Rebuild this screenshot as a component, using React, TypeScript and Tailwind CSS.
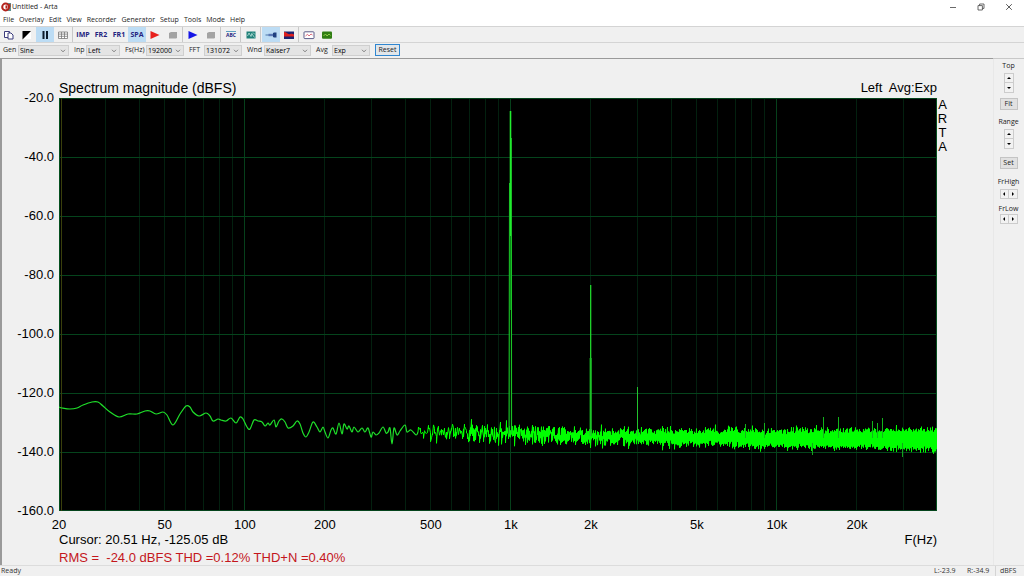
import { useMemo } from 'react'
import type { ReactNode } from 'react'

const PLOT_W = 878
const PLOT_H = 413
const F_MIN = 20
const F_MAX = 40000
const BIN_HZ = 192000 / 131072

const Y_TICKS = ['-20.0', '-40.0', '-60.0', '-80.0', '-100.0', '-120.0', '-140.0', '-160.0']
const X_TICKS: [number, string][] = [
  [20, '20'],
  [50, '50'],
  [100, '100'],
  [200, '200'],
  [500, '500'],
  [1000, '1k'],
  [2000, '2k'],
  [5000, '5k'],
  [10000, '10k'],
  [20000, '20k'],
]

const MENU = ['File', 'Overlay', 'Edit', 'View', 'Recorder', 'Generator', 'Setup', 'Tools', 'Mode', 'Help']

// low end of the trace, in plot units
const LOW_END: [number, number][] = [
  [0, 309], [3, 310], [11, 311], [18, 310], [24, 307], [33, 304], [39, 304], [44, 308], [51, 314], [60, 319],
  [69, 316], [78, 316], [86, 313], [91, 313], [97, 316], [104, 314], [108, 317], [114, 327], [121, 316],
  [127, 308], [131, 309], [134, 314], [140, 318], [147, 315], [151, 318], [154, 323], [159, 321], [162, 322],
  [167, 323], [172, 320], [177, 325], [181, 319], [184, 321], [188, 329], [191, 331], [195, 322], [199, 323],
  [203, 324], [206, 328], [209, 325], [211, 327], [215, 322], [217, 329], [220, 323], [223, 321], [226, 324],
  [229, 330], [234, 328], [238, 323], [241, 326], [244, 335], [247, 339], [250, 334], [254, 324], [258, 329],
  [261, 334], [264, 329], [266, 334], [269, 340], [272, 332], [274, 330], [277, 336], [280, 325], [283, 336],
  [285, 326], [288, 331], [290, 328], [293, 334], [295, 329], [299, 334], [303, 330], [306, 334], [309, 330],
  [312, 339], [314, 334], [317, 337], [320, 335], [324, 329], [327, 335], [329, 334], [331, 330], [333, 346],
  [335, 330], [338, 337], [341, 333], [346, 327], [348, 334], [352, 332], [357, 337], [359, 334],
]

// centre of the noise floor
const FLOOR: [number, number][] = [
  [359, 334],
  [450, 335],
  [520, 338],
  [600, 339],
  [700, 340],
  [878, 341],
]

const SPURS: [number, number][] = [
  [686, 326],
  [705, 325],
  [764, 319],
  [779, 319],
  [813, 323],
  [818, 325],
  [823, 320],
]

function xOf(f: number) {
  return (PLOT_W * Math.log(f / F_MIN)) / Math.log(F_MAX / F_MIN)
}

function floorAt(x: number) {
  for (let i = 1; i < FLOOR.length; i++) {
    const [x0, y0] = FLOOR[i - 1]
    const [x1, y1] = FLOOR[i]
    if (x <= x1) return y0 + ((y1 - y0) * (x - x0)) / (x1 - x0)
  }
  return FLOOR[FLOOR.length - 1][1]
}

function makeRandom(seed: number) {
  let s = seed
  return () => {
    s = (s * 1664525 + 1013904223) >>> 0
    return s / 4294967296
  }
}

function smoothPath(pts: [number, number][]) {
  let d = `M${pts[0][0]} ${pts[0][1]}`
  for (let i = 0; i < pts.length - 1; i++) {
    const p0 = pts[Math.max(i - 1, 0)]
    const p1 = pts[i]
    const p2 = pts[i + 1]
    const p3 = pts[Math.min(i + 2, pts.length - 1)]
    const c1 = [p1[0] + (p2[0] - p0[0]) / 6, p1[1] + (p2[1] - p0[1]) / 6]
    const c2 = [p2[0] - (p3[0] - p1[0]) / 6, p2[1] - (p3[1] - p1[1]) / 6]
    d += `C${c1[0].toFixed(1)} ${c1[1].toFixed(1)} ${c2[0].toFixed(1)} ${c2[1].toFixed(1)} ${p2[0]} ${p2[1]}`
  }
  return d
}

function noisePath() {
  const rnd = makeRandom(7321)
  const gauss = () => {
    const u = rnd() || 0.0001
    return Math.sqrt(-2 * Math.log(u)) * Math.cos(2 * Math.PI * rnd())
  }
  let d = 'M359 334'
  let carry = 0
  for (let x = 359; x < PLOT_W; x++) {
    const f = F_MIN * Math.pow(F_MAX / F_MIN, x / PLOT_W)
    carry += (f * Math.log(F_MAX / F_MIN)) / PLOT_W / BIN_HZ / 2
    const n = Math.floor(carry)
    carry -= n
    if (n === 0) continue
    const mid = floorAt(x)
    const spread = 1 + 0.4 * Math.max(0, (640 - x) / 280)
    let lo = Infinity
    let hi = -Infinity
    for (let i = 0; i < n; i++) {
      const g = gauss()
      const y = mid + spread * g * (g > 0 ? 4.1 : 3.6)
      lo = Math.min(lo, y)
      hi = Math.max(hi, y)
    }
    d += `L${x + 0.5} ${lo.toFixed(1)}L${x + 0.5} ${hi.toFixed(1)}`
  }
  return d
}

function Spectrum() {
  const low = useMemo(() => smoothPath(LOW_END), [])
  const noise = useMemo(noisePath, [])

  const lines: { f: number; major: boolean }[] = []
  for (const decade of [10, 100, 1000, 10000]) {
    for (let k = 1; k <= 9; k++) {
      const f = decade * k
      if (f > F_MIN && f < F_MAX) lines.push({ f, major: k === 1 })
    }
  }

  return (
    <svg
      viewBox={`0 0 ${PLOT_W} ${PLOT_H}`}
      preserveAspectRatio="none"
      className="block w-full h-full min-h-0 bg-black"
      role="img"
      aria-label="Spectrum magnitude"
    >
      {lines.map(({ f, major }) => (
        <rect
          key={f}
          x={Math.floor(xOf(f))}
          y={0}
          width={1}
          height={PLOT_H}
          fill={major ? '#06401b' : '#03200f'}
        />
      ))}
      {Y_TICKS.map((t, i) => (
        <rect key={t} x={0} y={Math.min(i * 59, PLOT_H - 1)} width={PLOT_W} height={1} fill="#05441c" />
      ))}
      <rect x={0} y={0} width={1} height={PLOT_H} fill="#05501f" />
      <rect x={PLOT_W - 1} y={0} width={1} height={PLOT_H} fill="#05501f" />
      <rect x={2} y={0} width={1} height={PLOT_H} fill="#3a3f0c" />

      <path d={low} fill="none" stroke="#1fe02a" strokeWidth={1.2} />
      <path d={noise} fill="none" stroke="#00ff00" strokeWidth={1} strokeLinejoin="bevel" />
      {SPURS.map(([x, y]) => (
        <rect key={x} x={x} y={y} width={1} height={340 - y} fill="#13b31c" />
      ))}
      <path d="M753.5 345V357M843.5 345V359" stroke="#13a31c" />

      {/* fundamental */}
      <path d="M450.5 138L450.5 330L452.5 330L452.5 138Z" fill="#0a8a18" />
      <rect x={451} y={212} width={1} height={120} fill="#001a04" />
      <path d="M451.5 13V138" stroke="#22ee30" strokeWidth={1.6} />
      <path d="M450.5 85L450 336M452.4 40L452.6 336" fill="none" stroke="#1cc828" strokeWidth={1} />

      {/* harmonics */}
      <path d="M531.7 187V338" stroke="#22e42e" strokeWidth={1.2} />
      <path d="M531 260V338M532.4 260V338" stroke="#1cb826" strokeWidth={0.8} />
      <path d="M578.5 289V338" stroke="#22c42e" strokeWidth={1} />
    </svg>
  )
}

function ToolButton({ label, active, children }: { label: string; active?: boolean; children: ReactNode }) {
  return (
    <button
      type="button"
      aria-label={label}
      aria-pressed={active}
      className={`flex w-[18px] h-full items-center justify-center text-[7px] font-bold text-[#23237f] ${
        active ? 'bg-[#bcdcf4]' : ''
      }`}
    >
      {children}
    </button>
  )
}

function Divider() {
  return <span className="w-[2px] h-full border-l border-[#c8c8c8]" />
}

function Icon({ children }: { children: ReactNode }) {
  return (
    <svg viewBox="0 0 12 10" className="w-[12px] h-[10px]" aria-hidden="true">
      {children}
    </svg>
  )
}

function Combo({ id, label, value, width, labelWidth }: {
  id: string
  label: string
  value: string
  width: string
  labelWidth: string
}) {
  return (
    <div className="flex items-center">
      <label htmlFor={id} className={`${labelWidth} whitespace-nowrap`}>
        {label}
      </label>
      <span className={`relative block ${width}`}>
        <select
          id={id}
          defaultValue={value}
          className="block w-full h-[11px] appearance-none border border-[#cfcfcf] bg-[#e4e4e4] pl-px text-[7px] leading-[9px] text-black"
        >
          <option>{value}</option>
        </select>
        <svg viewBox="0 0 6 4" className="pointer-events-none absolute right-[3px] top-[4px] w-[6px] h-[4px]">
          <path d="M1 0.8L3 2.8L5 0.8" fill="none" stroke="#555" strokeWidth="0.7" />
        </svg>
      </span>
    </div>
  )
}

function Arrow({ dir }: { dir: 'up' | 'down' | 'left' | 'right' }) {
  const shapes = {
    up: 'M1 4L3 2L5 4Z',
    down: 'M1 2L3 4L5 2Z',
    left: 'M4 1L2 3L4 5Z',
    right: 'M2 1L4 3L2 5Z',
  }
  return (
    <svg viewBox="0 0 6 6" className="w-[6px] h-[6px]" aria-hidden="true">
      <path d={shapes[dir]} fill="#000" />
    </svg>
  )
}

const stepClass = 'flex items-center justify-center border border-[#cccccc] bg-[#f2f2f2]'

function VerticalStepper({ name }: { name: string }) {
  return (
    <div className="flex flex-col">
      <button type="button" aria-label={`${name} up`} className={`${stepClass} w-[10px] h-[10px]`}>
        <Arrow dir="up" />
      </button>
      <button type="button" aria-label={`${name} down`} className={`${stepClass} w-[10px] h-[10px] border-t-0`}>
        <Arrow dir="down" />
      </button>
    </div>
  )
}

function HorizontalStepper({ name }: { name: string }) {
  return (
    <div className="flex">
      <button type="button" aria-label={`${name} left`} className={`${stepClass} w-[9px] h-[10px]`}>
        <Arrow dir="left" />
      </button>
      <button type="button" aria-label={`${name} right`} className={`${stepClass} w-[9px] h-[10px] border-l-0`}>
        <Arrow dir="right" />
      </button>
    </div>
  )
}

function TitleBar() {
  return (
    <header className="flex items-center justify-between h-[14px] bg-white">
      <div className="flex items-center gap-px pl-px">
        <svg viewBox="0 0 10 10" className="w-[10px] h-[10px]" aria-hidden="true">
          <rect x="4" y="1" width="6" height="8" fill="#5f8f8f" />
          <rect x="5.5" y="2" width="4" height="3" fill="#a8352c" />
          <circle cx="4.6" cy="5" r="3.4" fill="#fff" stroke="#b3231c" strokeWidth="2" />
          <path d="M4.5 3.4H6.4V6.6H4.5Z" fill="#b3231c" />
        </svg>
        <h1>Untitled - Arta</h1>
      </div>
      <div className="flex pr-px">
        <button type="button" aria-label="Minimize" className="flex w-[28px] h-[14px] items-center justify-center">
          <svg viewBox="0 0 8 8" className="w-[8px] h-[8px]">
            <path d="M1 4.5H7" stroke="#444" strokeWidth="0.8" />
          </svg>
        </button>
        <button type="button" aria-label="Restore" className="flex w-[28px] h-[14px] items-center justify-center">
          <svg viewBox="0 0 8 8" className="w-[8px] h-[8px]">
            <path d="M1 2.6H5.4V7H1ZM2.6 2.6V1H7V5.4H5.4" fill="none" stroke="#444" strokeWidth="0.8" />
          </svg>
        </button>
        <button type="button" aria-label="Close" className="flex w-[28px] h-[14px] items-center justify-center">
          <svg viewBox="0 0 8 8" className="w-[8px] h-[8px]">
            <path d="M1.2 1.2L6.8 6.8M6.8 1.2L1.2 6.8" stroke="#333" strokeWidth="0.8" />
          </svg>
        </button>
      </div>
    </header>
  )
}

function Toolbar() {
  return (
    <div className="flex items-center h-[16px] border-t border-[#d4d4d4]">
      <ToolButton label="Copy">
        <Icon>
          <path d="M1.5 1.5H6.5V7.5H1.5Z" fill="#fff" stroke="#3a3a7c" />
          <path d="M5 3H8L10 5V9H5Z" fill="#fff" stroke="#3a3a7c" />
        </Icon>
      </ToolButton>
      <ToolButton label="Black and white">
        <Icon>
          <path d="M10 1V9H2Z" fill="#fff" />
          <path d="M1.5 1H10L1.5 9.5Z" fill="#000" />
        </Icon>
      </ToolButton>
      <ToolButton label="Pause" active>
        <Icon>
          <path d="M3.5 1H5.5V9H3.5ZM7 1H9V9H7Z" fill="#0b1a2a" />
        </Icon>
      </ToolButton>
      <ToolButton label="Data">
        <Icon>
          <path d="M1.5 2H10.5V8.5H1.5ZM1.5 4.1H10.5M1.5 6.3H10.5M4.5 2V8.5M7.5 2V8.5" fill="#fff" stroke="#777" strokeWidth="0.8" />
        </Icon>
      </ToolButton>
      <Divider />
      <ToolButton label="Impulse">IMP</ToolButton>
      <ToolButton label="Frequency response 2">FR2</ToolButton>
      <ToolButton label="Frequency response 1">FR1</ToolButton>
      <ToolButton label="Spectrum" active>
        SPA
      </ToolButton>
      <ToolButton label="Record">
        <Icon>
          <path d="M1.5 1L10.5 5L1.5 9Z" fill="#e8201c" />
        </Icon>
      </ToolButton>
      <ToolButton label="Stop recording">
        <Icon>
          <path d="M2 3L4 2H10V8L9 8.5H2Z" fill="#a3a3a3" />
        </Icon>
      </ToolButton>
      <Divider />
      <ToolButton label="Play">
        <Icon>
          <path d="M1.5 1L10.5 5L1.5 9Z" fill="#1414e6" />
        </Icon>
      </ToolButton>
      <ToolButton label="Stop">
        <Icon>
          <path d="M2 3L4 2H10V8L9 8.5H2Z" fill="#a3a3a3" />
        </Icon>
      </ToolButton>
      <Divider />
      <ToolButton label="Comment">
        <span className="border-t border-[#5fa0c0] text-[5px] leading-[6px]">ABC</span>
      </ToolButton>
      <Divider />
      <ToolButton label="Time record">
        <Icon>
          <rect x="1.5" y="1.5" width="9" height="7" fill="#1f8079" />
          <path d="M2.5 6L4 3L6 6.5L7 3M7 4L9.5 7.5M8 2.5L10 4.5" fill="none" stroke="#bfe5dc" strokeWidth="0.8" />
        </Icon>
      </ToolButton>
      <Divider />
      <ToolButton label="Calibrate" active>
        <Icon>
          <path d="M0.5 5H5" stroke="#5f86b4" strokeWidth="1.2" />
          <rect x="3.5" y="3.8" width="4.5" height="2.4" fill="#5a78b4" />
          <path d="M8 3L9 2.5H11.5V7.5H9L8 7Z" fill="#20407f" />
        </Icon>
      </ToolButton>
      <ToolButton label="Overlay">
        <Icon>
          <rect x="1" y="1.5" width="10" height="7.5" fill="#1c2370" />
          <path d="M1 2.2C3 1.6 4.5 4.6 6.5 4.2S9.5 3.6 11 4.4V6.5H1Z" fill="#e0201f" />
        </Icon>
      </ToolButton>
      <Divider />
      <ToolButton label="Third octave">
        <Icon>
          <rect x="1" y="1.8" width="10" height="6.8" rx="0.8" fill="#fff" stroke="#4a4a7c" strokeWidth="0.9" />
          <path d="M2.5 6L4.5 4.3L6 6L8 4L9.5 5" fill="none" stroke="#d0455a" strokeWidth="0.8" />
        </Icon>
      </ToolButton>
      <ToolButton label="Scope">
        <Icon>
          <rect x="1" y="1.4" width="10" height="7.4" rx="1" fill="#2f7d12" />
          <path d="M2.5 6L4.5 4L6 6L8 4L9.5 5.4" fill="none" stroke="#a8e05a" strokeWidth="0.8" />
        </Icon>
      </ToolButton>
    </div>
  )
}

function SettingsBar() {
  return (
    <div className="flex items-center gap-[5px] h-[16px] border-t border-[#d4d4d4] pl-[3px] pb-px">
      <Combo id="gen" label="Gen" value="Sine" labelWidth="w-[15px]" width="w-[51px]" />
      <Combo id="inp" label="Inp" value="Left" labelWidth="w-[12px]" width="w-[34px]" />
      <Combo id="fs" label="Fs(Hz)" value="192000" labelWidth="w-[21px]" width="w-[38px]" />
      <Combo id="fft" label="FFT" value="131072" labelWidth="w-[15px]" width="w-[38px]" />
      <Combo id="wnd" label="Wnd" value="Kaiser7" labelWidth="w-[17px]" width="w-[47px]" />
      <Combo id="avg" label="Avg" value="Exp" labelWidth="w-[16px]" width="w-[38px]" />
      <button type="button" className="w-[25px] h-[12px] border border-[#2f86d0] bg-[#e1e6ea] text-[7px] leading-[10px]">
        Reset
      </button>
    </div>
  )
}

function ScalePanel() {
  return (
    <aside className="flex w-[31px] shrink-0 flex-col items-center border-l border-[#e8e8e8] pr-px pt-[2px] text-[#222]">
      <span className="leading-[10px]">Top</span>
      <div className="pt-[2px]">
        <VerticalStepper name="Top" />
      </div>
      <button type="button" className="mt-[5px] w-[18px] h-[12px] border border-[#c4c4c4] bg-[#e1e1e1]">
        Fit
      </button>
      <span className="pt-[7px] leading-[10px]">Range</span>
      <div className="pt-[2px]">
        <VerticalStepper name="Range" />
      </div>
      <button type="button" className="mt-[8px] w-[18px] h-[12px] border border-[#c4c4c4] bg-[#e1e1e1]">
        Set
      </button>
      <span className="pt-[8px] leading-[10px]">FrHigh</span>
      <div className="pt-[2px]">
        <HorizontalStepper name="FrHigh" />
      </div>
      <span className="pt-[5px] leading-[10px]">FrLow</span>
      <HorizontalStepper name="FrLow" />
    </aside>
  )
}

function ChartPanel() {
  return (
    <section className="grid min-w-0 flex-1 grid-cols-[57px_1fr_56px] grid-rows-[39px_1fr_54px] border-l-2 border-[#9a9a9a] font-['Liberation_Sans',Arial,sans-serif] text-[13px] leading-[14px] text-black">
      <div className="col-start-2 flex items-end justify-between pb-[3px]">
        <h2 className="text-[14px]">Spectrum magnitude (dBFS)</h2>
        <p className="whitespace-pre">{'Left  Avg:Exp'}</p>
      </div>

      <div className="col-start-1 row-start-2 -my-[7px] flex flex-col justify-between pr-[5px] text-right">
        {Y_TICKS.map((t) => (
          <span key={t}>{t}</span>
        ))}
      </div>
      <div className="col-start-2 row-start-2 min-h-0">
        <Spectrum />
      </div>
      <div className="col-start-3 row-start-2 flex flex-col">
        {['A', 'R', 'T', 'A'].map((c, i) => (
          <span key={i} className="w-[11px] text-center">
            {c}
          </span>
        ))}
      </div>

      <div className="col-start-2 row-start-3 whitespace-pre">
        <div className="relative h-[22px]">
          {X_TICKS.map(([f, text]) => (
            <span
              key={f}
              className="absolute top-[7px] -translate-x-1/2"
              style={{ left: `${(xOf(f) / PLOT_W) * 100}%` }}
            >
              {text}
            </span>
          ))}
        </div>
        <div className="flex justify-between">
          <span>Cursor: 20.51 Hz, -125.05 dB</span>
          <span>F(Hz)</span>
        </div>
        <p className="pt-[4px] text-[#c4161c]">{'RMS =  -24.0 dBFS THD =0.12% THD+N =0.40%'}</p>
      </div>
    </section>
  )
}

export default function App() {
  return (
    <div className="flex min-h-screen flex-col bg-[#f0f0f0] font-['Open_Sans','Noto_Sans',sans-serif] text-[7px] leading-[10px] text-[#1c1c1c]">
      <TitleBar />
      <nav className="flex items-center gap-[5px] h-[12px] bg-white pl-[3px]">
        {MENU.map((m) => (
          <button key={m} type="button">
            {m}
          </button>
        ))}
      </nav>
      <Toolbar />
      <SettingsBar />
      <main className="flex flex-1">
        <div className="flex min-w-0 flex-1 border-t border-[#9a9a9a]">
          <ChartPanel />
        </div>
        <div className="flex border-t border-[#c8c8c8]">
          <ScalePanel />
        </div>
      </main>
      <footer className="flex h-[12px] items-center border-t border-b border-t-[#dcdcdc] border-b-black pl-px text-[#333]">
        <span className="flex-1">Ready</span>
        <span className="w-[33px]">L:-23.9</span>
        <span className="w-[28px]">R:-34.9</span>
        <span className="w-[29px] border-l border-[#d4d4d4] pl-[4px]">dBFS</span>
      </footer>
    </div>
  )
}
